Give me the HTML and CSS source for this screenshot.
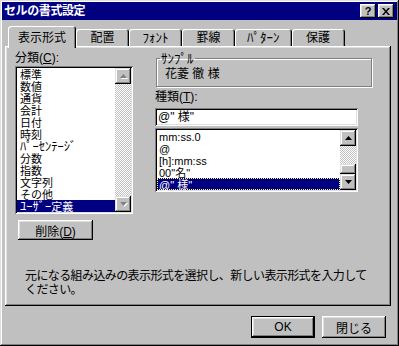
FILE: index.html
```html
<!DOCTYPE html>
<html lang="ja">
<head>
    <meta charset="UTF-8">
    <title>セルの書式設定</title>
    <link rel="stylesheet" href="styles.css">
</head>
<body>
    <div class="window">
        <div class="titlebar">
            <span class="title">セルの書式設定</span>
            <span class="title-btn">?</span>
            <span class="title-btn">
                <svg width="8" height="7" viewBox="0 0 8 7"><path d="M0 0h2l2 2.5L6 0h2L5 3.5 8 7H6L4 4.5 2 7H0l3-3.5z" fill="#000"/></svg>
            </span>
        </div>

        <div class="tabs">
            <div class="tab active">表示形式</div>
            <div class="tab">配置</div>
            <div class="tab"><span class="hw">ﾌｫﾝﾄ</span></div>
            <div class="tab">罫線</div>
            <div class="tab"><span class="hw">ﾊﾟﾀｰﾝ</span></div>
            <div class="tab">保護</div>
        </div>

        <div class="panel">
            <div class="columns">
                <div class="col-left">
                    <div class="label">分類(<u>C</u>):</div>
                    <div class="listbox category">
                        <ul class="items">
                            <li>標準</li>
                            <li>数値</li>
                            <li>通貨</li>
                            <li>会計</li>
                            <li>日付</li>
                            <li>時刻</li>
                            <li><span class="hw">ﾊﾟｰｾﾝﾃｰｼﾞ</span></li>
                            <li>分数</li>
                            <li>指数</li>
                            <li>文字列</li>
                            <li>その他</li>
                            <li class="selected"><span class="hw">ﾕｰｻﾞｰ</span>定義</li>
                        </ul>
                        <div class="scrollbar disabled">
                            <div class="arrow"><svg width="7" height="5" viewBox="0 0 7 5"><path d="M3.5 0L7 4H0z"/></svg></div>
                            <div class="track"></div>
                            <div class="arrow"><svg width="7" height="5" viewBox="0 0 7 5"><path d="M0 0h7L3.5 4z"/></svg></div>
                        </div>
                    </div>
                    <button class="btn delete">削除(<u>D</u>)</button>
                </div>

                <div class="col-right">
                    <fieldset class="sample">
                        <legend><span class="hw">ｻﾝﾌﾟﾙ</span></legend>
                        花菱 徹 様
                    </fieldset>
                    <div class="label type-label">種類(<u>T</u>):</div>
                    <div class="textbox">@" 様"</div>
                    <div class="listbox formats">
                        <ul class="items">
                            <li>mm:ss.0</li>
                            <li>@</li>
                            <li>[h]:mm:ss</li>
                            <li>00"名"</li>
                            <li class="selected focus">@" 様"</li>
                        </ul>
                        <div class="scrollbar">
                            <div class="arrow"><svg width="7" height="5" viewBox="0 0 7 5"><path d="M3.5 0L7 4H0z"/></svg></div>
                            <div class="track"></div>
                            <div class="thumb"></div>
                            <div class="arrow"><svg width="7" height="5" viewBox="0 0 7 5"><path d="M0 0h7L3.5 4z"/></svg></div>
                        </div>
                    </div>
                </div>
            </div>

            <p class="hint">元になる組み込みの表示形式を選択し、新しい表示形式を入力して<br>ください。</p>
        </div>

        <div class="buttons">
            <button class="btn default">OK</button>
            <button class="btn">閉じる</button>
        </div>
    </div>
</body>
</html>
```

FILE: styles.css
```css
* {
    box-sizing: border-box;
}
body {
    margin: 0;
    font: 12px "Liberation Sans", "Noto Sans CJK JP", sans-serif;
    color: #000;
    background: #c0c0c0;
}
.window {
    width: 399px;
    height: 346px;
    padding: 2px;
    background-color: #c0c0c0;
    box-shadow: inset -1px -1px #000, inset 1px 1px #dfdfdf, inset -2px -2px #808080, inset 2px 2px #fff;
    display: flex;
    flex-direction: column;
}
.titlebar {
    height: 18px;
    background-color: #000080;
    color: white;
    display: flex;
    align-items: center;
    gap: 2px;
    padding: 0 3px 0 2px;
}
.title {
    flex: 1;
    font-weight: bold;
    letter-spacing: -0.4px;
    line-height: 18px;
}
.title-btn {
    width: 16px;
    height: 14px;
    background-color: #c0c0c0;
    color: #000;
    font-weight: bold;
    font-size: 11px;
    display: flex;
    align-items: center;
    justify-content: center;
    box-shadow: inset -1px -1px #000, inset 1px 1px #fff, inset -2px -2px #808080, inset 2px 2px #dfdfdf;
}

/* half-width katakana look too small at the base size */
.hw {
    font-size: 13px;
    line-height: 1;
}

/* tab strip */
.tabs {
    display: flex;
    align-items: flex-end;
    height: 20px;
    margin: 6px 0 0 6px;
    position: relative;
    z-index: 1;
}
.tab {
    height: 17px;
    min-width: 53px;
    padding: 2px 12px 0;
    text-align: center;
    line-height: 14px;
    background-color: #c0c0c0;
    border-radius: 3px 3px 0 0;
    box-shadow: inset 1px 1px #fff, inset -1px 0 #000, inset -2px 0 #808080;
}
.tab.active {
    height: 22px;
    margin-bottom: -2px;
    padding: 5px 10px 0;
}

.panel {
    height: 260px;
    margin: 0 6px 0 3px;
    padding: 6px 0 0 10px;
    box-shadow: inset -1px -1px #000, inset 1px 1px #fff, inset -2px -2px #808080, inset 2px 2px #dfdfdf;
    display: flex;
    flex-direction: column;
}
.columns {
    display: flex;
    gap: 22px;
}
.col-left {
    width: 118px;
    display: flex;
    flex-direction: column;
}
.col-right {
    width: 217px;
    display: flex;
    flex-direction: column;
}
.label {
    line-height: 12px;
    height: 12px;
}

/* list boxes */
.listbox {
    display: flex;
    margin-top: 2px;
    padding: 2px;
    background-color: white;
    box-shadow: inset 1px 1px #808080, inset -1px -1px #fff, inset 2px 2px #000, inset -2px -2px #dfdfdf;
}
.category {
    height: 148px;
}
.formats {
    height: 64px;
}
.items {
    flex: 1;
    list-style: none;
    margin: 0;
    padding: 0;
    font-size: 11px;
}
.items li {
    height: 12px;
    line-height: 12px;
    padding: 1px 0 0 3px;
    white-space: nowrap;
}
.items .hw {
    font-size: 12.5px;
}
.formats .items li {
    padding-left: 2px;
}
.items li.selected {
    background-color: #000080;
    color: white;
}
.items li.focus {
    outline: 1px dotted #ffff80;
    outline-offset: -1px;
}
.scrollbar {
    width: 16px;
    display: flex;
    flex-direction: column;
}
.track {
    flex: 1;
    background: repeating-conic-gradient(#fff 0 25%, #c0c0c0 0 50%) 0 0 / 2px 2px;
}
.arrow,
.thumb {
    height: 16px;
    background-color: #c0c0c0;
    box-shadow: inset -1px -1px #000, inset 1px 1px #dfdfdf, inset -2px -2px #808080, inset 2px 2px #fff;
    display: flex;
    align-items: center;
    justify-content: center;
}
.thumb {
    height: 10px;
}
.arrow svg {
    fill: #000;
}
.disabled .arrow svg {
    fill: #808080;
    filter: drop-shadow(1px 1px 0 #fff);
}

/* right column */
.sample {
    margin: 0 0 0 1px;
    padding: 3px 0 6px 8px;
    border: 1px solid #808080;
    box-shadow: inset 1px 1px #fff, 1px 1px #fff;
    line-height: 12px;
}
.sample legend {
    margin-left: -5px;
    padding: 0 1px;
    line-height: 12px;
}
.type-label {
    margin-top: 4px;
}
.textbox {
    height: 18px;
    width: 203px;
    margin-top: 5px;
    padding: 2px 3px;
    line-height: 14px;
    background-color: white;
    box-shadow: inset 1px 1px #808080, inset -1px -1px #fff, inset 2px 2px #000, inset -2px -2px #dfdfdf;
}
.formats {
    width: 203px;
}

/* buttons */
.btn {
    font: inherit;
    color: #000;
    height: 22px;
    width: 64px;
    padding: 0;
    border: none;
    background-color: #c0c0c0;
    box-shadow: inset -1px -1px #000, inset 1px 1px #fff, inset -2px -2px #808080, inset 2px 2px #dfdfdf;
}
.btn.delete {
    width: 75px;
    height: 20px;
    margin: 6px 0 0 3px;
}
.btn.default {
    border: 1px solid #000;
}

.hint {
    margin: 29px 0 0 10px;
    line-height: 14px;
    letter-spacing: -0.6px;
}

.buttons {
    display: flex;
    justify-content: flex-end;
    gap: 7px;
    margin-top: 10px;
    padding-right: 11px;
}
```
